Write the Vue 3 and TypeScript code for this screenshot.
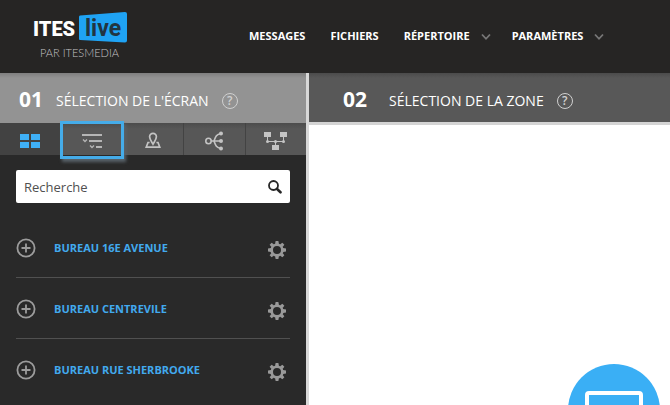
<script setup lang="ts">
import { ref } from 'vue'

interface NavItem {
  label: string
  menu: boolean
}

const navItems: NavItem[] = [
  { label: 'MESSAGES', menu: false },
  { label: 'FICHIERS', menu: false },
  { label: 'RÉPERTOIRE', menu: true },
  { label: 'PARAMÈTRES', menu: true },
]

const views = ['Grille', 'Liste', 'Carte', 'Arborescence', 'Réseau']
const current = ref(0)
const search = ref('')
const offices = ['BUREAU 16E AVENUE', 'BUREAU CENTREVILE', 'BUREAU RUE SHERBROOKE']
const teeth = [0, 45, 90, 135, 180, 225, 270, 315]
</script>

<template>
  <div class="app">
    <header class="top">
      <a class="logo" href="#" aria-label="ITES live par Itesmedia">
        <svg width="96" height="48" viewBox="0 0 96 48">
          <path d="M48 4.500 93 1Q95 1 95 3V29.500Q95 31.500 93 31.500L48 29Q47 29 47 28V6Q47 4.500 48 4.500Z" fill="#1fa3f4" />
          <text class="logo-ites" x="1" y="25">ITES</text>
          <text class="logo-live" x="53" y="25">live</text>
          <text class="logo-by" x="8" y="46">PAR ITESMEDIA</text>
        </svg>
      </a>
      <nav class="nav">
        <a v-for="item in navItems" :key="item.label" href="#" class="nav-link">
          {{ item.label }}
          <svg v-if="item.menu" class="chevron" width="10" height="8" viewBox="0 0 10 8">
            <path d="M1 1.500 5 5.800 9 1.500" fill="none" stroke="#777" stroke-width="1.800" />
          </svg>
        </a>
      </nav>
    </header>

    <main class="columns">
      <section class="screens">
        <h2 class="step step-active">
          <span class="step-number">01</span>
          <span class="step-title">SÉLECTION DE L'ÉCRAN</span>
          <button class="help" type="button" aria-label="Aide">?</button>
        </h2>

        <div class="tabs">
          <button
            v-for="(view, i) in views"
            :key="view"
            type="button"
            class="tab"
            :class="{ 'tab-current': i === current, 'tab-marked': i === 1 }"
            :aria-label="view"
            @click="current = i"
          >
            <svg v-if="i === 0" width="20" height="16" viewBox="0 0 20 16" fill="#3fb0f7">
              <path d="M0 1h9v6H0zM11 1h9v6h-9zM0 9h9v6H0zM11 9h9v6h-9z" />
            </svg>
            <svg v-else-if="i === 1" width="20" height="16" viewBox="0 0 20 16" fill="none" stroke="#b5b5b5" stroke-width="2">
              <path d="M0 2H20M7 8H20M14 14H20" />
              <path d="M1 6.500 3 8.500 5 6.500M8 12.500 10 14.500 12 12.500" stroke-width="1.300" />
            </svg>
            <svg v-else-if="i === 2" width="16" height="17" viewBox="0 0 16 17" fill="none" stroke="#c4c4c4" stroke-width="1.700">
              <path d="M8 12.200C6.500 9.500 4.600 7.300 4.600 4.800a3.400 3.400 0 0 1 6.800 0C11.400 7.300 9.500 9.500 8 12.200Z" />
              <path d="M4.600 10.500H3L1.200 15.200H14.800L13 10.500H11.400" />
            </svg>
            <svg v-else-if="i === 3" width="18" height="20" viewBox="0 0 18 20" fill="none" stroke="#c4c4c4" stroke-width="1.600">
              <circle cx="3.500" cy="10" r="2.700" />
              <path d="M6.200 10H16M16 2.500C11 3.500 10.500 6 9 10C10.500 14 11 16.500 16 17.500" />
              <g fill="#c4c4c4" stroke="none">
                <circle cx="16" cy="2.500" r="2" /><circle cx="16" cy="10" r="2" /><circle cx="16" cy="17.500" r="2" />
              </g>
            </svg>
            <svg v-else width="23" height="18" viewBox="0 0 23 18" fill="#c4c4c4">
              <path d="M0 0h7v5H0zM16 0h7v5h-7zM8 13h7v5H8z" />
              <path d="M3.500 5V9.500H19.500V5M11.500 9.500V13" fill="none" stroke="#c4c4c4" />
              <circle cx="3.500" cy="9.500" r="1.500" /><circle cx="11.500" cy="9.500" r="1.500" /><circle cx="19.500" cy="9.500" r="1.500" />
            </svg>
          </button>
        </div>

        <div class="panel">
          <form class="search" @submit.prevent>
            <input v-model="search" class="search-input" type="text" placeholder="Recherche" aria-label="Recherche" />
            <button class="icon-button" type="submit" aria-label="Rechercher">
              <svg width="14" height="14" viewBox="0 0 14 14" fill="none" stroke="#262626">
                <circle cx="5.500" cy="5.500" r="4.500" stroke-width="1.800" />
                <path d="M8.800 8.800 12.500 12.300" stroke-width="2.600" stroke-linecap="round" />
              </svg>
            </button>
          </form>

          <ul class="offices">
            <li v-for="office in offices" :key="office" class="office">
              <button class="icon-button" type="button" :aria-label="'Ouvrir ' + office">
                <svg width="20" height="20" viewBox="0 0 20 20" fill="none" stroke="#9c9c9c" stroke-width="1.800">
                  <circle cx="10" cy="10" r="8.600" />
                  <path d="M10 5.500V14.500M5.500 10H14.500" />
                </svg>
              </button>
              <a href="#" class="office-name">{{ office }}</a>
              <button class="icon-button gear" type="button" :aria-label="'Réglages ' + office">
                <svg width="18" height="18" viewBox="0 0 18 18" fill="#999">
                  <circle cx="9" cy="9" r="5.300" fill="none" stroke="#999" stroke-width="2.600" />
                  <path v-for="angle in teeth" :key="angle" d="M7.100 3 7.600 0H10.400L10.900 3Z" :transform="`rotate(${angle} 9 9)`" />
                </svg>
              </button>
            </li>
          </ul>
        </div>
      </section>

      <section class="zone">
        <h2 class="step step-next">
          <span class="step-number">02</span>
          <span class="step-title">SÉLECTION DE LA ZONE</span>
          <button class="help" type="button" aria-label="Aide">?</button>
        </h2>
        <button class="preview" type="button" aria-label="Aperçu">
          <svg width="58" height="44" viewBox="0 0 58 44" fill="none" stroke="#fff" stroke-width="4">
            <rect x="2" y="2" width="54" height="36" rx="2" />
            <path d="M20 42H38" />
          </svg>
        </button>
      </section>
    </main>
  </div>
</template>

<style>
body {
  margin: 0;
}
</style>

<style scoped>
.app {
  display: flex;
  flex-direction: column;
  height: 100vh;
  overflow: hidden;
  background: #fff;
  font-family: "Open Sans", "Noto Sans", sans-serif;
}

.app * {
  box-sizing: border-box;
}

a {
  text-decoration: none;
}

button {
  padding: 0;
  border: 0;
  background: none;
  font-family: inherit;
  cursor: pointer;
}

svg {
  display: block;
}

.top {
  display: flex;
  align-items: center;
  flex: none;
  height: 73px;
  padding: 0 32px;
  background: #262524;
}

.logo {
  flex: none;
  margin-right: 121px;
  padding-bottom: 4px;
}

.logo-ites {
  fill: #fff;
  font: 900 20px Roboto, sans-serif;
}

.logo-live {
  fill: #223541;
  font: 700 23px Roboto, sans-serif;
}

.logo-by {
  fill: #c4c4c4;
  font: 300 11px Lato, sans-serif;
}

.nav {
  display: flex;
  gap: 25px;
  padding-bottom: 1px;
}

.nav-link {
  display: flex;
  align-items: center;
  color: #fff;
  font-size: 11px;
  font-weight: 700;
  line-height: 16px;
  white-space: nowrap;
}

.nav-link + .nav-link .chevron {
  margin: 2px -4px 0 11px;
}

.columns {
  display: flex;
  flex: 1;
  min-height: 0;
}

.screens {
  display: flex;
  flex-direction: column;
  flex: 0 0 309px;
  background: #292929;
  border-right: 3px solid #d8d8d8;
}

.zone {
  position: relative;
  flex: 1;
  overflow: hidden;
}

.step {
  display: flex;
  align-items: center;
  gap: 13px;
  margin: 0;
  color: #fff;
  font-weight: 400;
  white-space: nowrap;
}

.step-active {
  height: 50px;
  padding: 5px 0 0 19px;
  background: linear-gradient(#7f7f7f, #939393 5px);
}

.step-next {
  height: 52px;
  padding: 6px 0 0 34px;
  background: linear-gradient(#4b4b4b, #585858 5px);
  border-bottom: 3px solid #d4d4d4;
}

.step-number {
  padding-bottom: 3px;
  font-size: 21px;
  font-weight: 700;
  line-height: 28px;
}

.step-next .step-number {
  margin-right: 9px;
}

.step-title {
  padding-top: 1px;
  font-size: 14px;
  line-height: 20px;
}

.help {
  width: 16px;
  height: 16px;
  border: 1px solid #d0d0d0;
  border-radius: 50%;
  color: #d0d0d0;
  font-size: 12px;
  font-weight: 600;
  line-height: 14px;
}

.tabs {
  display: flex;
  height: 32px;
  background: #565656;
}

.tab {
  position: relative;
  display: flex;
  flex: 1;
  align-items: center;
  justify-content: center;
  padding-top: 3px;
  border-right: 1px solid #434343;
  background: linear-gradient(#4c4c4c, #575757 6px);
}

.tab:last-child {
  border-right: 0;
}

.tab-current {
  background: #424242;
}

.tab-marked {
  z-index: 1;
}

.tab-marked::after {
  position: absolute;
  inset: -2px -2px -4px -1px;
  border: 3px solid #45ace9;
  box-shadow: 2px 3px 3px #59636a;
  content: "";
}

.panel {
  padding: 15px 16px 0;
}

.search {
  display: flex;
  align-items: center;
  height: 33px;
  padding: 0 8px;
  border-radius: 2px;
  background: #fff;
}

.search-input {
  flex: 1;
  min-width: 0;
  padding: 0;
  border: 0;
  outline: 0;
  background: none;
  color: #444;
  font: 13px "Open Sans", "Noto Sans", sans-serif;
}

.search-input::placeholder {
  color: #505050;
  opacity: 1;
}

.offices {
  margin: 14px 0 0;
  padding: 0;
  list-style: none;
}

.office {
  display: flex;
  align-items: center;
  height: 61px;
  padding-top: 1px;
  border-bottom: 1px solid #505050;
}

.office:last-child {
  border-bottom-color: transparent;
}

.icon-button {
  flex: none;
}

.office-name {
  flex: 1;
  margin-left: 18px;
  color: #42a9ee;
  font-size: 11px;
  font-weight: 700;
  line-height: 16px;
}

.gear {
  padding: 5px 4px 0 0;
}

.preview {
  position: absolute;
  right: 10px;
  bottom: -51px;
  display: flex;
  justify-content: center;
  width: 92px;
  height: 92px;
  padding-top: 27px;
  border-radius: 50%;
  background: #3aaff5;
}
</style>
